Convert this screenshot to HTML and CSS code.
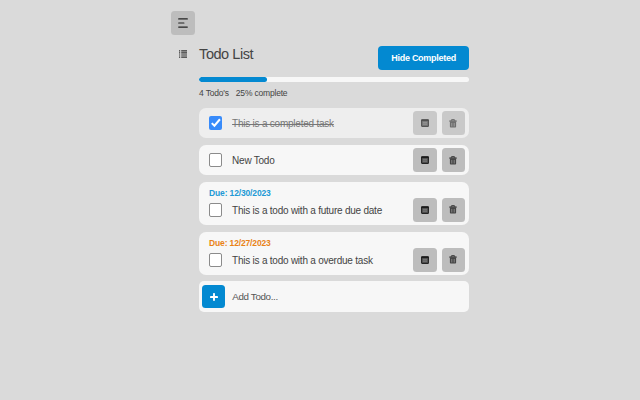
FILE: index.html
```html
<!DOCTYPE html>
<html lang="en">
<head>
<meta charset="utf-8">
<title>Todo List</title>
<link rel="stylesheet" href="styles.css">
</head>
<body>
<svg class="defs" width="0" height="0">
  <symbol id="calendar" viewBox="0 0 8 8">
    <rect x=".6" y=".8" width="6.8" height="6.6" rx=".7" fill="#5a5a5a" stroke="#222" stroke-width="1.1"/>
    <path d="M.4 1.3h7.2" stroke="#1c1c1c" stroke-width="1.6"/>
    <path d="M2 3.6h4M2 5.2h4" stroke="#888" stroke-width=".6"/>
  </symbol>
  <symbol id="trash" viewBox="0 0 8 9">
    <path d="M2.6 1.6V.6h2.8v1" fill="none" stroke="#333" stroke-width=".9"/>
    <path d="M.4 2.1h7.2" stroke="#2a2a2a" stroke-width="1.3"/>
    <path d="M.9 3h6.2v4.8q0 .8-.8.8H1.7q-.8 0-.8-.8z" fill="#444"/>
    <path d="M2.8 3.9v3.6M5.2 3.9v3.6" stroke="#999" stroke-width=".8"/>
  </symbol>
</svg>
<div class="app">
  <aside class="sidebar">
    <button class="icon-btn" aria-label="Menu">
      <svg width="10" height="10" viewBox="0 0 10 10" fill="none" stroke="#222" stroke-width="1.2" stroke-linecap="round"><path d="M.7.9h8.6M.7 5h5.2M.7 9.1h8.6"/></svg>
    </button>
    <svg class="list-icon" width="8" height="8" viewBox="0 0 8 8" stroke="#333" stroke-width="1.2"><path d="M0 .8h1.2M0 2.9h1.2M0 5h1.2M0 7.1h1.2M2.2 .8H8M2.2 2.9H8M2.2 5H8M2.2 7.1H8"/></svg>
  </aside>
  <main class="main">
    <header class="header">
      <h1 class="title">Todo List</h1>
      <button class="hide-btn">Hide Completed</button>
    </header>
    <div class="progress"><div class="bar" style="width: 25%"></div></div>
    <div class="stats"><span>4 Todo's</span><span>25% complete</span></div>
    <ul class="list">
      <li class="card done">
        <div class="row"><span class="check checked"><svg width="14" height="14" viewBox="0 0 14 14" fill="none" stroke="#fff" stroke-width="2"><path d="M2.8 7.2l2.7 2.7 5.6-6.6"/></svg></span><span class="text">This is a completed task</span>
        <button class="icon-btn"><svg width="8" height="8"><use href="#calendar"/></svg></button><button class="icon-btn"><svg width="8" height="9"><use href="#trash"/></svg></button></div>
      </li>
      <li class="card">
        <div class="row"><span class="check"></span><span class="text">New Todo</span>
        <button class="icon-btn"><svg width="8" height="8"><use href="#calendar"/></svg></button><button class="icon-btn"><svg width="8" height="9"><use href="#trash"/></svg></button></div>
      </li>
      <li class="card dated">
        <div class="due">Due: 12/30/2023</div>
        <div class="row"><span class="check"></span><span class="text">This is a todo with a future due date</span>
        <button class="icon-btn"><svg width="8" height="8"><use href="#calendar"/></svg></button><button class="icon-btn"><svg width="8" height="9"><use href="#trash"/></svg></button></div>
      </li>
      <li class="card dated">
        <div class="due overdue">Due: 12/27/2023</div>
        <div class="row"><span class="check"></span><span class="text">This is a todo with a overdue task</span>
        <button class="icon-btn"><svg width="8" height="8"><use href="#calendar"/></svg></button><button class="icon-btn"><svg width="8" height="9"><use href="#trash"/></svg></button></div>
      </li>
    </ul>
    <div class="add">
      <button class="add-btn" aria-label="Add"><svg width="8" height="8" viewBox="0 0 8 8" stroke="#fff" stroke-width="1.9" stroke-linecap="round"><path d="M4 .9v6.2M.9 4h6.2"/></svg></button>
      <span class="placeholder">Add Todo...</span>
    </div>
  </main>
</div>
</body>
</html>
```
FILE: styles.css
```css
* { box-sizing: border-box; }
body {
  margin: 0;
  background: #dadada;
  color: #444;
  font-family: "Liberation Sans", Arial, sans-serif;
  font-size: 10px;
  letter-spacing: -0.23px;
}
button { border: 0; padding: 0; font-family: inherit; }
.defs { display: block; height: 0; }
.app {
  display: flex;
  gap: 4.3px;
  width: 298.4px;
  margin-left: 171px;
  padding-top: 11.3px;
}
.sidebar {
  display: flex;
  flex-direction: column;
  align-items: center;
  gap: 14.8px;
  width: 23.8px;
}
.icon-btn {
  display: flex;
  flex: none;
  align-items: center;
  justify-content: center;
  width: 23.8px;
  height: 23.8px;
  border-radius: 3.5px;
  background: #bdbdbd;
}
.main { flex: 1; padding-top: 35px; }
.header { display: flex; justify-content: space-between; height: 23.7px; }
.title { margin: 0; font-size: 14.5px; font-weight: 400; line-height: 17px; letter-spacing: -0.45px; }
.hide-btn {
  width: 91.6px;
  height: 23.7px;
  border-radius: 4px;
  background: #0389d1;
  color: #fff;
  font-size: 9px;
  font-weight: 700;
  letter-spacing: -0.28px;
}
.progress { height: 5px; margin-top: 6.6px; border-radius: 3px; background: #f7f7f7; overflow: hidden; }
.bar { height: 100%; border-radius: 3px; background: #0389d1; }
.stats { display: flex; gap: 7px; margin-top: 6.9px; font-size: 8.5px; line-height: 10px; letter-spacing: -0.19px; white-space: nowrap; }
.list {
  display: flex;
  flex-direction: column;
  gap: 7px;
  margin: 9.6px 0 6.4px;
  padding: 0;
  list-style: none;
}
.card { height: 30px; padding: 3px 4px 0 9.5px; border-radius: 7px; background: #f7f7f7; }
.card.dated { height: 43px; }
.row { display: flex; align-items: center; height: 24px; }
.dated .row { margin-top: 2.9px; }
.check {
  flex: none;
  width: 13.8px;
  height: 13.8px;
  border: 1px solid #8b8b8b;
  border-radius: 2px;
  background: #fff;
}
.check.checked { border: 0; background: #388bfa; }
.check svg { display: block; width: 100%; height: 100%; }
.text { flex: 1; margin-left: 9.7px; padding-top: 1px; line-height: 12px; white-space: nowrap; }
.dated .text { padding-top: 2px; }
.row .icon-btn + .icon-btn { margin-left: 4.7px; }
.done { background: #eee; }
.done .icon-btn { opacity: .75; }
.done .text { color: #777; text-decoration: line-through; }
.due { padding-top: 3px; height: 10px; margin-left: .5px; color: #2299d5; font-size: 8.5px; font-weight: 700; line-height: 10px; letter-spacing: -0.15px; }
.due.overdue { color: #e98216; }
.add {
  display: flex;
  align-items: center;
  gap: 7px;
  height: 30.5px;
  padding-left: 3.2px;
  border-radius: 5px;
  background: #f7f7f7;
}
.add-btn {
  display: flex;
  align-items: center;
  justify-content: center;
  width: 23px;
  height: 23.5px;
  border-radius: 3.5px;
  background: #0389d1;
}
.placeholder { color: #555; font-size: 9.8px; letter-spacing: -0.35px; }
```
